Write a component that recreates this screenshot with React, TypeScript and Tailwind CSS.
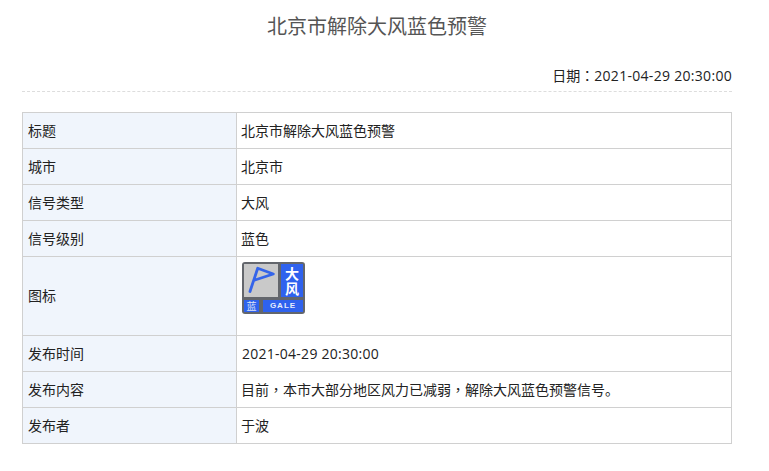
const PUNCT = "font-['Noto_Sans_CJK_TC','Noto_Sans_CJK_SC',sans-serif]";
const DIGITS = "tracking-[0.3px]";

const rows: { label: string; value: React.ReactNode }[] = [
  { label: "标题", value: "北京市解除大风蓝色预警" },
  { label: "城市", value: "北京市" },
  { label: "信号类型", value: "大风" },
  { label: "信号级别", value: "蓝色" },
  { label: "图标", value: null },
  { label: "发布时间", value: <span className="ml-[1px] tracking-[0.26px]">2021-04-29 20:30:00</span> },
  {
    label: "发布内容",
    value: (
      <>
        目前<span className={PUNCT}>，</span>本市大部分地区风力已减弱<span className={PUNCT}>，</span>解除大风蓝色预警信号。
      </>
    ),
  },
  { label: "发布者", value: "于波" },
];

const GaleIcon = () => (
  <div className="flex h-[52px] w-[63px] flex-col gap-[3px] rounded-[3px] bg-[#63666c] px-[2px] py-[2px]">
    <div className="flex h-[33px] gap-[3px]">
      <div className="h-full w-[34px] bg-[#c9c9c9]">
        <svg viewBox="0 0 34 33" className="h-full w-full">
          <path d="M6 27.5 L13.7 4.3 L29.3 10 L11 16" fill="none" stroke="#3464ea" strokeWidth="2.8" strokeLinejoin="round" strokeLinecap="round" />
        </svg>
      </div>
      <div className="flex flex-1 items-center justify-center bg-[#2f62ee] text-[14px] leading-[15px] font-bold text-white">
        <span className="w-[14px] break-all">大风</span>
      </div>
    </div>
    <div className="flex flex-1 gap-[4px]">
      <div className="flex w-[15px] items-center justify-center overflow-hidden bg-[#2f62ee] text-[10px] leading-none text-[#dfe4f5]">蓝</div>
      <div className="flex flex-1 items-center justify-center bg-[#2f62ee] font-['Liberation_Sans',sans-serif] text-[8px] leading-none font-bold tracking-[1px] text-[#e8ecfa]">GALE</div>
    </div>
  </div>
);

export default function App() {
  return (
    <div className="min-h-[471px] bg-white px-[22px] pr-[37px] font-['Open_Sans','Noto_Sans_CJK_SC',sans-serif] text-sm text-[#222]">
      <h1 className="pt-[12px] text-center text-[20px] leading-[30px] font-normal text-[#555]">北京市解除大风蓝色预警</h1>
      <div className="mt-[21px] border-b border-dashed border-[#ddd] pb-[3px] text-right leading-[24px]">
        日期<span className={PUNCT}>：</span>
        <span className={DIGITS}>2021-04-29 20:30:00</span>
      </div>
      <table className="mt-[20px] w-full table-fixed border-collapse">
        <colgroup>
          <col className="w-[214px]" />
          <col />
        </colgroup>
        <tbody>
          {rows.map((row) => (
            <tr key={row.label} className={row.label === "图标" ? "h-[79px]" : "h-[36px]"}>
              <td className="border border-[#d0d0d0] bg-[#f0f5fc] px-[5px] align-middle">{row.label}</td>
              <td className="border border-[#d0d0d0] px-[4px] align-top">
                {row.label === "图标" ? (
                  <div className="pt-[5px] pl-[1px]">
                    <GaleIcon />
                  </div>
                ) : (
                  <div className="leading-[35px]">{row.value}</div>
                )}
              </td>
            </tr>
          ))}
        </tbody>
      </table>
    </div>
  );
}
